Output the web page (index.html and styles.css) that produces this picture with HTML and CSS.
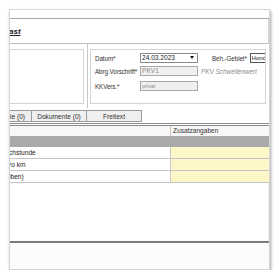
FILE: index.html
```html
<!DOCTYPE html>
<html lang="de">
<head>
  <meta charset="UTF-8">
  <title>Erfassung</title>
  <link rel="stylesheet" href="styles.css">
</head>
<body>
  <div class="window">
    <div class="toolbar"></div>
    <div class="titlebar"><span class="title">ast</span></div>

    <div class="form">
      <div class="panel panel-left"></div>
      <div class="sep"></div>
      <div class="panel panel-right">
        <div class="row">
          <label class="lbl">Datum*</label>
          <div class="field date">24.03.2023<span class="drop"></span></div>
          <label class="lbl lbl-beh">Beh.-Gebiet*</label>
          <div class="field beh">Homö</div>
        </div>
        <div class="row row-2">
          <label class="lbl">Abrg.Vorschrift*</label>
          <div class="field ro">PKV1</div>
          <span class="hint">PKV Schwellenwert</span>
        </div>
        <div class="row row-3">
          <label class="lbl">KKVers.*</label>
          <div class="field ro small">privat</div>
        </div>
      </div>
    </div>

    <div class="tabs">
      <button class="tab tab-first">ie (0)</button>
      <button class="tab">Dokumente (0)</button>
      <button class="tab">Freitext</button>
    </div>

    <div class="table">
      <div class="thead">
        <div class="c1"></div>
        <div class="c2">Zusatzangaben</div>
      </div>
      <div class="band"></div>
      <div class="tr"><div class="c1">chstunde</div><div class="c2"></div></div>
      <div class="tr"><div class="c1">ro km</div><div class="c2"></div></div>
      <div class="tr"><div class="c1">iben)</div><div class="c2"></div></div>
    </div>

    <div class="spacer"></div>
    <div class="footer"></div>
  </div>
</body>
</html>
```

FILE: styles.css
```css
body {
  margin: 0;
  background: #ffffff;
  font-family: "Liberation Sans", Arial, sans-serif;
  font-size: 6px;
  color: #333;
}
.window {
  margin: 9px 0 0 9px;
  width: 261px;
  height: 261px;
  box-sizing: border-box;
  border: 1px solid #d6d6d6;
  background: #fff;
  box-shadow: 1px 2px 3px rgba(0,0,0,0.35);
  overflow: hidden;
  display: flex;
  flex-direction: column;
}
.toolbar {
  height: 8px;
  flex: none;
  border-bottom: 1px solid #a8a8a8;
}
.titlebar {
  height: 24px;
  flex: none;
  border-bottom: 1px solid #bdbdbd;
  border-right: 1px solid #cfcfcf;
  display: flex;
  align-items: center;
}
.title {
  font-weight: bold;
  font-style: italic;
  text-decoration: underline;
  font-size: 8px;
  color: #222;
  margin-left: -1px;
}
.form {
  height: 64px;
  flex: none;
  display: flex;
  padding: 5px 3px 3px 0;
  box-sizing: border-box;
}
.panel {
  border: 1px solid #d4d4d4;
  box-sizing: border-box;
}
.panel-left {
  width: 74px;
  height: 55px;
  border-left: none;
}
.sep {
  width: 1px;
  background: #c8c8c8;
  margin: -5px 2px -3px 3px;
}
.panel-right {
  flex: 1;
  height: 55px;
  overflow: hidden;
  padding: 3px 0 0 4px;
}
.row {
  display: flex;
  align-items: center;
  height: 10px;
  white-space: nowrap;
}
.row-2 {
  margin-top: 3px;
}
.row-3 {
  margin-top: 5px;
}
.lbl {
  width: 45px;
  flex: none;
  font-size: 6.3px;
  letter-spacing: -0.1px;
  color: #333;
}
.field {
  width: 58px;
  height: 10px;
  flex: none;
  box-sizing: border-box;
  border: 1px solid #8a8a8a;
  background: #fff;
  font-size: 6.6px;
  line-height: 8px;
  padding-left: 1px;
  color: #222;
  position: relative;
}
.drop {
  position: absolute;
  right: 3px;
  top: 2px;
  width: 0;
  height: 0;
  border-left: 2.5px solid transparent;
  border-right: 2.5px solid transparent;
  border-top: 3px solid #111;
}
.lbl-beh {
  width: auto;
  margin-left: 14px;
  margin-right: 3px;
}
.beh {
  width: 17px;
  border-color: #555;
  font-size: 5.6px;
  letter-spacing: -0.2px;
  border-right: none;
}
.ro {
  background: #f0f0f0;
  border-color: #a8a8a8;
  color: #8a8a8a;
  font-size: 6.6px;
}
.small {
  font-size: 5.4px;
}
.hint {
  margin-left: 3px;
  font-style: italic;
  color: #8a8a8a;
  font-size: 6.4px;
}
.tabs {
  height: 18px;
  flex: none;
  display: flex;
  align-items: flex-start;
  padding-top: 2px;
  box-sizing: border-box;
  border-bottom: 3px double #8a8a8a;
}
.tab {
  width: 55px;
  height: 12px;
  padding: 0;
  margin: 0;
  border: 1px solid #9a9a9a;
  border-left: none;
  background: #efefef;
  font-family: "Liberation Sans", Arial, sans-serif;
  font-size: 6.6px;
  color: #333;
}
.tab-first {
  width: 22px;
  text-align: left;
}
.table {
  flex: none;
}
.thead {
  display: flex;
  height: 10px;
  background: #f7f7f7;
}
.thead .c2 {
  font-size: 6.6px;
  line-height: 10px;
  padding-left: 2px;
}
.c1 {
  width: 160px;
  flex: none;
  border-right: 1px solid #c8c8c8;
}
.c2 {
  flex: 1;
}
.band {
  height: 11px;
  background: #a9a9a9;
}
.tr {
  display: flex;
  height: 12px;
  box-sizing: border-box;
  border-bottom: 1px solid #c4c4c4;
}
.tr .c1 {
  font-size: 6.6px;
  line-height: 11px;
  color: #222;
  text-indent: -1px;
}
.tr .c2 {
  background: #fdf6c6;
}
.spacer {
  height: 58px;
  flex: none;
  border-right: 1px solid #ececec;
}
.footer {
  flex: 1;
  border-top: 2px solid #7c7c7c;
  background: #fcfcfc;
}
```
